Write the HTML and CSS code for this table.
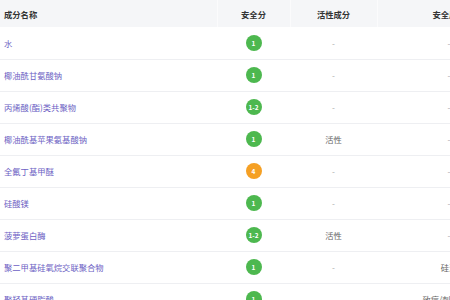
FILE: index.html
```html
<!DOCTYPE html>
<html lang="zh">
<head>
<meta charset="utf-8">
<link rel="stylesheet" href="styles.css">
</head>
<body>
<div class="wrap">
<table class="tbl">
  <colgroup>
    <col class="c-name"><col class="c-score"><col class="c-active"><col class="c-risk">
  </colgroup>
  <thead>
    <tr><th class="left">成分名称</th><th>安全分</th><th>活性成分</th><th>安全风险</th></tr>
  </thead>
  <tbody>
    <tr><td class="name">水</td><td><span class="badge g">1</span></td><td class="mute">-</td><td class="mute">-</td></tr>
    <tr><td class="name">椰油酰甘氨酸钠</td><td><span class="badge g">1</span></td><td class="mute">-</td><td class="mute">-</td></tr>
    <tr><td class="name">丙烯酸(酯)类共聚物</td><td><span class="badge g">1-2</span></td><td class="mute">-</td><td class="mute">-</td></tr>
    <tr><td class="name">椰油酰基苹果氨基酸钠</td><td><span class="badge g">1</span></td><td class="txt">活性</td><td class="mute">-</td></tr>
    <tr><td class="name">全氟丁基甲醚</td><td><span class="badge o">4</span></td><td class="mute">-</td><td class="mute">-</td></tr>
    <tr><td class="name">硅酸镁</td><td><span class="badge g">1</span></td><td class="mute">-</td><td class="mute">-</td></tr>
    <tr><td class="name">菠萝蛋白酶</td><td><span class="badge g">1-2</span></td><td class="txt">活性</td><td class="mute">-</td></tr>
    <tr><td class="name">聚二甲基硅氧烷交联聚合物</td><td><span class="badge g">1</span></td><td class="mute">-</td><td class="txt">硅油</td></tr>
    <tr><td class="name">聚羟基硬脂酸</td><td><span class="badge g">1</span></td><td class="mute">-</td><td class="txt">致痘/刺激风险</td></tr>
  </tbody>
</table>
</div>
</body>
</html>
```
FILE: styles.css
```css
html, body {
  margin: 0;
  padding: 0;
  background: #fff;
  overflow: hidden;
}
.wrap {
  width: 450px;
  height: 300px;
  overflow: hidden;
}
.tbl {
  border-collapse: collapse;
  table-layout: fixed;
  width: 521px;
  font-family: "Noto Sans CJK SC", "Noto Sans", sans-serif;
  font-size: 8.3px;
}
.c-name { width: 217px; }
.c-score { width: 73px; }
.c-active { width: 87px; }
.c-risk { width: 144px; }
th {
  height: 27px;
  padding: 0;
  background: #f5f6f8;
  color: #333;
  font-weight: bold;
  text-align: center;
  border-right: 1px solid #fbfbfc;
  box-sizing: border-box;
}
th.left { text-align: left; padding-left: 4px; }
td {
  height: 32px;
  padding: 0;
  text-align: center;
  border-bottom: 1px solid #eeeff2;
  box-sizing: border-box;
  white-space: nowrap;
}
td.name {
  text-align: left;
  padding-left: 4px;
  color: #6d5fc4;
}
td.mute { color: #aaa; }
td.txt { color: #666; }
.badge {
  display: inline-flex;
  align-items: center;
  justify-content: center;
  width: 16px;
  height: 16px;
  border-radius: 50%;
  color: #fff;
  font-size: 6.5px;
  font-weight: bold;
  vertical-align: middle;
}
.badge.g { background: #4db84f; }
.badge.o { background: #f5a024; }
```
